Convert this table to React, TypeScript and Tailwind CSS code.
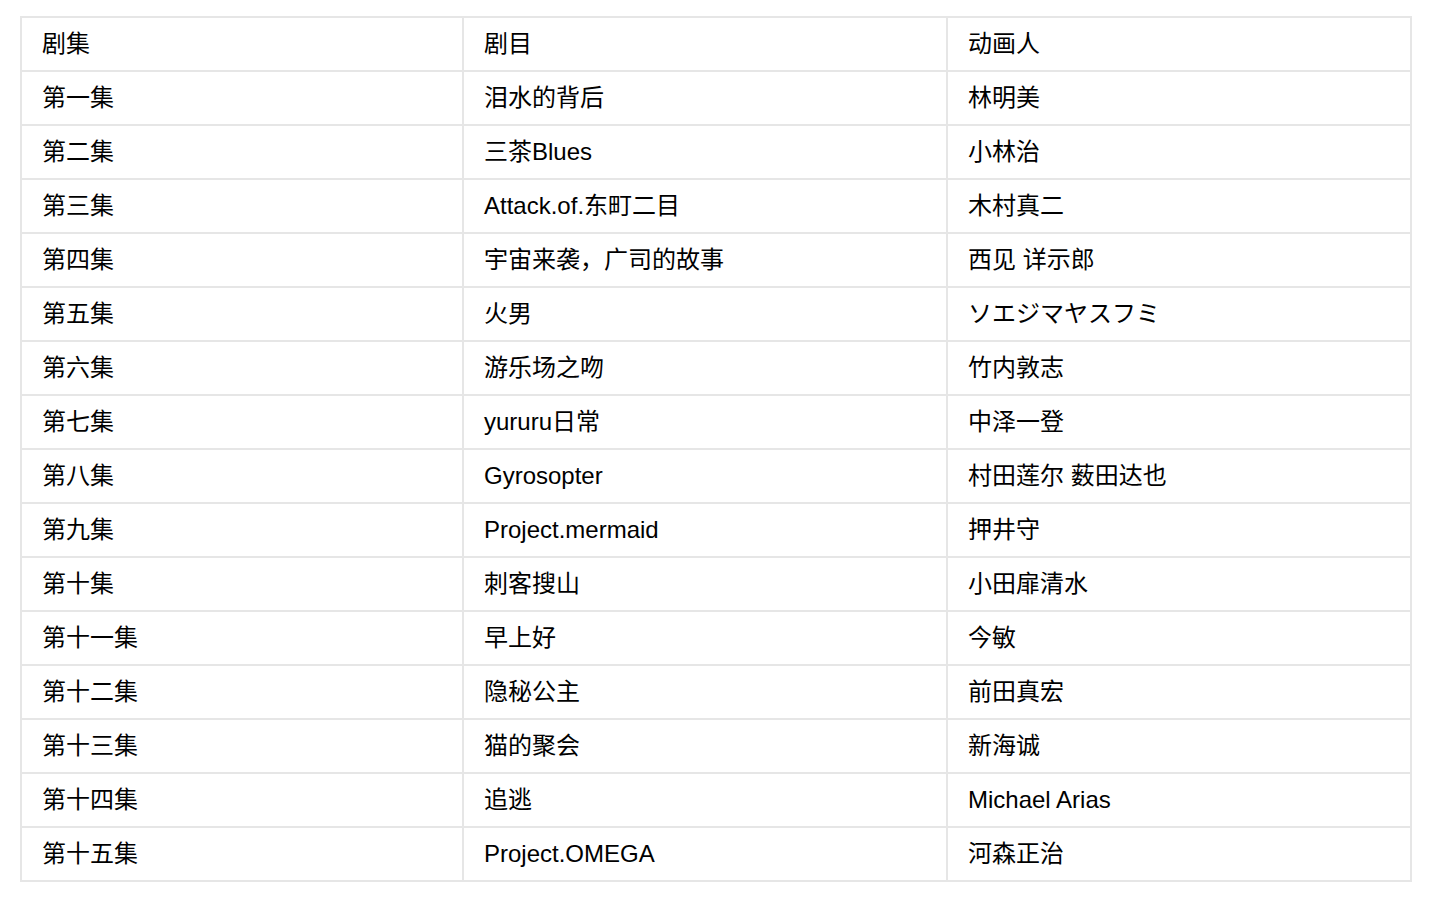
const rows: [string, string, string][] = [
  ['第一集', '泪水的背后', '林明美'],
  ['第二集', '三茶Blues', '小林治'],
  ['第三集', 'Attack.of.东町二目', '木村真二'],
  ['第四集', '宇宙来袭，广司的故事', '西见 详示郎'],
  ['第五集', '火男', 'ソエジマヤスフミ'],
  ['第六集', '游乐场之吻', '竹内敦志'],
  ['第七集', 'yururu日常', '中泽一登'],
  ['第八集', 'Gyrosopter', '村田莲尔 薮田达也'],
  ['第九集', 'Project.mermaid', '押井守'],
  ['第十集', '刺客搜山', '小田扉清水'],
  ['第十一集', '早上好', '今敏'],
  ['第十二集', '隐秘公主', '前田真宏'],
  ['第十三集', '猫的聚会', '新海诚'],
  ['第十四集', '追逃', 'Michael Arias'],
  ['第十五集', 'Project.OMEGA', '河森正治'],
];

const cell = 'h-[54px] border-2 border-[#e6e6e6] px-[20px] py-0 text-left align-middle font-normal';

export default function App() {
  return (
    <div className="min-h-screen bg-white pt-[16px] pl-[20px] text-[24px] leading-none text-black [font-family:'Liberation_Sans','Noto_Sans_CJK_SC',sans-serif]">
      <table className="w-[1390px] table-fixed border-collapse">
        <colgroup>
          <col className="w-[442px]" />
          <col className="w-[484px]" />
          <col className="w-[464px]" />
        </colgroup>
        <thead>
          <tr>
            <th className={cell}>剧集</th>
            <th className={cell}>剧目</th>
            <th className={cell}>动画人</th>
          </tr>
        </thead>
        <tbody>
          {rows.map(([ep, title, artist]) => (
            <tr key={ep}>
              <td className={cell}>{ep}</td>
              <td className={cell}>{title}</td>
              <td className={cell}>{artist}</td>
            </tr>
          ))}
        </tbody>
      </table>
    </div>
  );
}
